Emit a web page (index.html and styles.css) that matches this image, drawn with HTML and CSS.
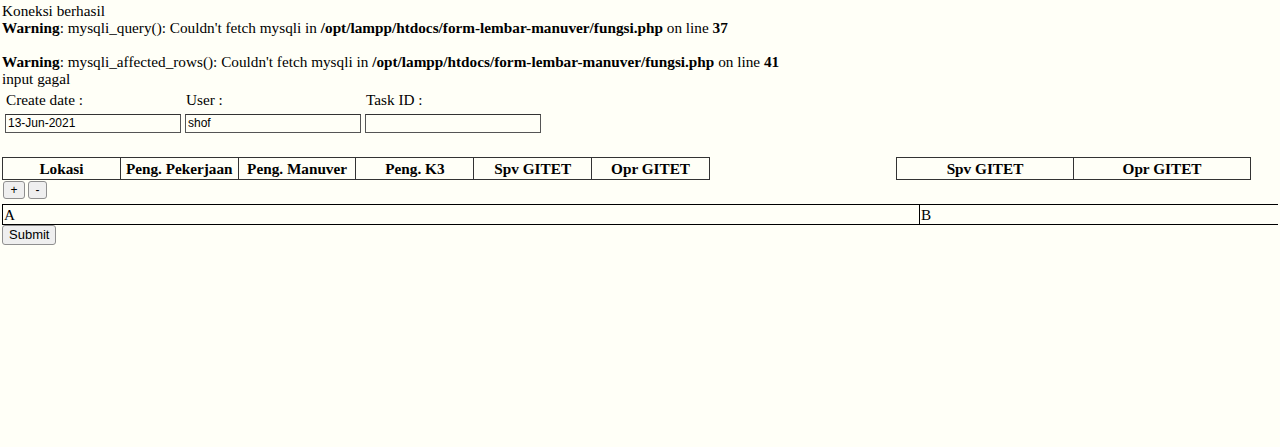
FILE: index.html
```html
<!DOCTYPE html>
<html>
<head>
<meta charset="utf-8">
<title>Form Lembar Manuver</title>
<link rel="stylesheet" href="styles.css">
</head>
<body>
<div class="msg">Koneksi berhasil<br>
<b>Warning</b>: mysqli_query(): Couldn't fetch mysqli in <b>/opt/lampp/htdocs/form-lembar-manuver/fungsi.php</b> on line <b>37</b><br>
<br>
<b>Warning</b>: mysqli_affected_rows(): Couldn't fetch mysqli in <b>/opt/lampp/htdocs/form-lembar-manuver/fungsi.php</b> on line <b>41</b><br>
input gagal</div>
<form class="form">
  <table class="meta">
    <tr>
      <td class="lbl">Create date :</td>
      <td class="lbl">User :</td>
      <td class="lbl">Task ID :</td>
    </tr>
    <tr>
      <td><input class="field" type="text" value="13-Jun-2021"></td>
      <td><input class="field" type="text" value="shof"></td>
      <td><input class="field" type="text" value=""></td>
    </tr>
  </table>
  <div class="heads">
    <table class="head head-main">
      <tr>
        <th>Lokasi</th>
        <th>Peng. Pekerjaan</th>
        <th>Peng. Manuver</th>
        <th>Peng. K3</th>
        <th>Spv GITET</th>
        <th>Opr GITET</th>
      </tr>
    </table>
    <table class="head head-side">
      <tr>
        <th>Spv GITET</th>
        <th>Opr GITET</th>
      </tr>
    </table>
  </div>
  <div class="ctrls">
    <button type="button" class="btn btn-plus">+</button>
    <button type="button" class="btn btn-minus">-</button>
  </div>
  <table class="rows">
    <tr>
      <td class="cell-a">A</td>
      <td class="cell-b">B</td>
    </tr>
  </table>
  <button type="submit" class="btn btn-submit">Submit</button>
</form>
</body>
</html>
```
FILE: styles.css
```css
html {
  background: #fffff7;
  overflow: hidden;
}
body {
  margin: 2px;
  font-family: "Liberation Serif", "Times New Roman", serif;
  font-size: 15.25px;
  line-height: 17px;
  color: #000;
  background: #fffff7;
}
.msg {
  margin: 0;
}
.form {
  margin: 0;
}
.meta {
  border-collapse: separate;
  border-spacing: 2px;
}
.meta td {
  width: 176px;
  padding: 1px;
  vertical-align: middle;
}
.meta .lbl {
  height: 19px;
  text-indent: 1px;
}
.field {
  box-sizing: border-box;
  width: 176px;
  height: 19px;
  margin: 0;
  padding: 1px 2px;
  font-family: "Liberation Sans", Arial, sans-serif;
  font-size: 12px;
  border: 1px solid #555;
  border-top-color: #333;
  background: #fffff7;
  color: #000;
}
.heads {
  display: flex;
  gap: 186px;
  margin-top: 21px;
}
.head {
  border-collapse: collapse;
  table-layout: fixed;
}
.head-main {
  width: 708px;
}
.head-side {
  width: 355px;
}
.head th {
  border: 1px solid #333;
  font-weight: bold;
  padding: 1px 0 0;
  height: 20px;
  text-align: center;
}
.ctrls {
  display: flex;
  gap: 3px;
  padding: 1px 0 0 1px;
}
.btn {
  font-family: "Liberation Sans", Arial, sans-serif;
  font-size: 12px;
  color: #000;
  background: #efefef;
  border: 1px solid #8f8f8f;
  border-radius: 3px;
  margin: 0;
  padding: 0;
  height: 18px;
}
.btn-plus {
  width: 22px;
}
.btn-minus {
  width: 19px;
}
.rows {
  border-collapse: collapse;
  width: 1300px;
  margin-top: 5px;
}
.rows td {
  border: 1px solid #000;
  padding: 0 1px;
  height: 19px;
  line-height: 17px;
}
.cell-a {
  width: 914px;
}
.btn-submit {
  display: block;
  height: 20px;
  padding: 0 6px;
  font-size: 13px;
  margin-top: 0;
  width: 54px;
}
```
